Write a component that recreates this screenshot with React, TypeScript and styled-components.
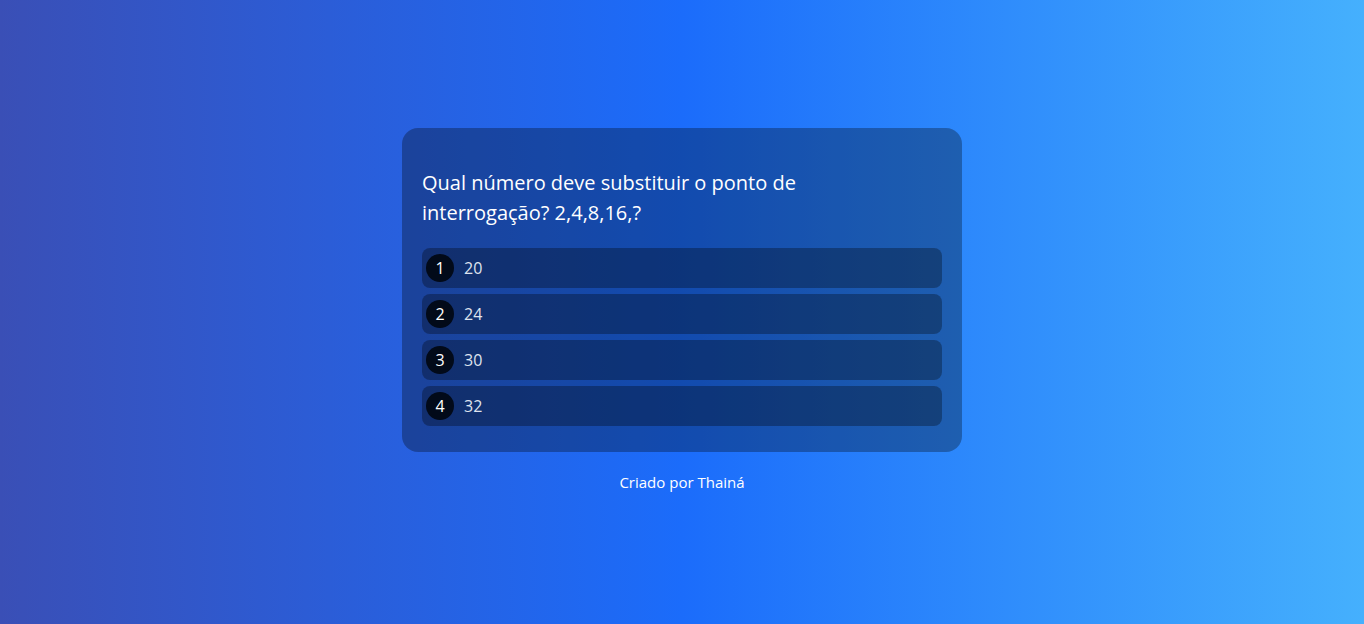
import React from "react";
import styled, { createGlobalStyle } from "styled-components";

const Global = createGlobalStyle`
  * { box-sizing: border-box; }
  html, body { margin: 0; padding: 0; }
  body {
    font-family: "Open Sans", "Noto Sans", sans-serif;
    background: linear-gradient(90deg, #3a4fb6 0%, #1b6cfb 50%, #45b0fd 100%);
    min-height: 100vh;
  }
`;

const Page = styled.main`
  min-height: 100vh;
  display: flex;
  flex-direction: column;
  align-items: center;
  justify-content: center;
  gap: 20px;
  padding-bottom: 4px;
`;

const Card = styled.section`
  width: 560px;
  background: rgba(0, 0, 0, 0.3);
  border-radius: 16px;
  padding: 40px 20px 26px;
  display: flex;
  flex-direction: column;
  gap: 20px;
`;

const Question = styled.h2`
  margin: 0;
  max-width: 420px;
  color: #ffffff;
  font-size: 20px;
  font-weight: 400;
  line-height: 30px;
`;

const Options = styled.div`
  display: flex;
  flex-direction: column;
  gap: 6px;
`;

const Option = styled.button`
  height: 40px;
  display: flex;
  align-items: center;
  gap: 10px;
  padding: 0 4px;
  border: none;
  border-radius: 8px;
  background: rgba(0, 0, 0, 0.3);
  color: #dfe3ee;
  font-family: inherit;
  font-size: 16px;
  text-align: left;
  cursor: pointer;
`;

const Badge = styled.span`
  width: 28px;
  height: 28px;
  border-radius: 50%;
  background: #020a19;
  color: #ffffff;
  display: flex;
  align-items: center;
  justify-content: center;
  font-size: 16px;
`;

const Footer = styled.p`
  margin: 0;
  color: #ffffff;
  font-size: 15px;
  line-height: 20px;
`;

const options = ["20", "24", "30", "32"];

export default function App() {
  return (
    <>
      <Global />
      <Page>
        <Card>
          <Question>
            Qual número deve substituir o ponto de interrogação? 2,4,8,16,?
          </Question>
          <Options>
            {options.map((o, i) => (
              <Option key={o}>
                <Badge>{i + 1}</Badge>
                {o}
              </Option>
            ))}
          </Options>
        </Card>
        <Footer>Criado por Thainá</Footer>
      </Page>
    </>
  );
}
